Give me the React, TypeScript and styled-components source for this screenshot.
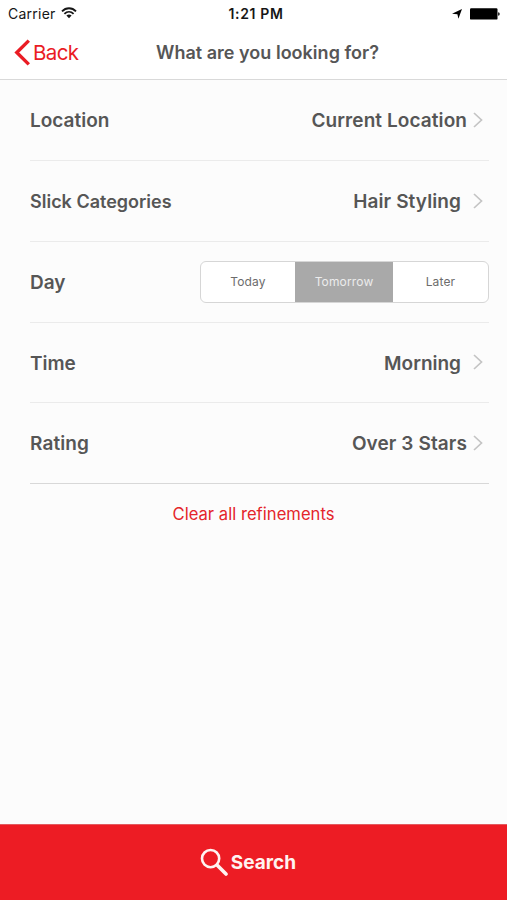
import React from "react";
import styled, { createGlobalStyle } from "styled-components";

const GlobalStyle = createGlobalStyle`
  * { box-sizing: border-box; }
  body { margin: 0; background: #fcfcfc; }
  button { border: 0; padding: 0; background: none; font: inherit; cursor: pointer; }
`;

const Screen = styled.div`
  height: 900px;
  display: flex;
  flex-direction: column;
  background: #fcfcfc;
  font-family: Inter, "Liberation Sans", sans-serif;
  color: #565656;
  white-space: nowrap;
`;

const Header = styled.header`
  height: 80px;
  background: #fff;
  border-bottom: 1px solid #d9d9d9;
`;

const StatusBar = styled.div`
  height: 27px;
  display: grid;
  grid-template-columns: 1fr auto 1fr;
  align-items: center;
  padding: 0 7px 0 8px;
  color: #161616;
`;

const Carrier = styled.div`
  display: flex;
  align-items: center;
  gap: 5px;
  font-size: 14px;
  letter-spacing: 0.25px;

  svg { margin-bottom: 2px; }
`;

const Clock = styled.div`
  font-size: 14px;
  font-weight: 600;
  letter-spacing: 0.65px;
  padding-left: 4px;
`;

const Indicators = styled.div`
  display: flex;
  justify-content: flex-end;
  align-items: center;
  gap: 7px;
  color: #000;
`;

const NavBar = styled.nav`
  height: 52px;
  display: grid;
  grid-template-columns: 142px 1fr 114px;
  align-items: center;
`;

const BackButton = styled.button`
  display: flex;
  align-items: center;
  gap: 2px;
  margin: 0 0 1px 14px;
  color: #ea1c24;
  font-size: 20.5px;
  letter-spacing: -0.6px;
`;

const Title = styled.h1`
  margin: 0 0 1px;
  font-size: 18px;
  font-weight: 600;
  letter-spacing: 0.02px;
  text-align: center;
`;

const Filters = styled.main`
  display: grid;
  grid-template-rows: 81px 81px repeat(3, 80.67px);
  margin: 0 18px 0 30px;
`;

const Row = styled.div`
  display: flex;
  justify-content: space-between;
  align-items: center;
  padding-top: 1.6px;
  border-bottom: 1px solid #ebebeb;

  &:last-child { border-bottom-color: #d8d8d8; }
`;

const Label = styled.span<{ $size?: number; $tracking?: number }>`
  font-size: ${(p) => p.$size ?? 19}px;
  letter-spacing: ${(p) => p.$tracking ?? 0}px;
  font-weight: 600;
`;

const Picker = styled.button<{ $gap: number }>`
  display: flex;
  align-items: center;
  gap: ${(p) => p.$gap}px;
  margin-right: 6px;
  color: inherit;

  svg { margin-bottom: 2px; }
`;

const Segments = styled.div`
  width: 289px;
  height: 42px;
  display: grid;
  grid-template-columns: 94px 98px 1fr;
  margin-bottom: 2px;
  border: 1px solid #d6d6d6;
  border-radius: 6px;
  background: #fff;
  overflow: hidden;
`;

const Segment = styled.button<{ $active?: boolean }>`
  font-size: 12px;
  letter-spacing: 0.15px;
  color: ${(p) => (p.$active ? "#ececec" : "#6c6c6c")};
  background: ${(p) => (p.$active ? "#a9a9a9" : "transparent")};
`;

const ClearButton = styled.button`
  align-self: center;
  height: 60px;
  color: #e4252b;
  font-size: 16.6px;
  letter-spacing: 0.02px;
`;

const SearchButton = styled.button`
  height: 76px;
  margin-top: auto;
  display: flex;
  align-items: center;
  justify-content: center;
  gap: 3px;
  padding-right: 11px;
  background: #ed1c24;
  border-top: 1px solid #e25a5f;
  color: #fff3f1;
  font-size: 19px;
  font-weight: 700;

  svg { margin-bottom: 2px; }
`;

const WifiIcon = () => (
  <svg width="16" height="12" viewBox="0 0 16 12" fill="none" stroke="currentColor" strokeWidth="1.8">
    <path d="M1 4.3C5 .2 11 .2 15 4.3M3.4 6.8c2.7-2.7 6.5-2.7 9.2 0" />
    <path d="M8 11.2 5.4 8.6q2.6-2 5.2 0Z" fill="currentColor" stroke="none" />
  </svg>
);

const LocationArrow = () => (
  <svg width="10" height="10" viewBox="0 0 10 10" fill="currentColor">
    <path d="M10 0 6.4 9.8 5.4 5.2 0 4.7Z" />
  </svg>
);

const BatteryIcon = () => (
  <svg width="31" height="12" viewBox="0 0 31 12" fill="currentColor">
    <rect x="1" y="0.2" width="27.5" height="11.4" rx="1.2" />
    <path d="M29.2 4.2q1.5.3 1.5 1.8t-1.5 1.8Z" />
  </svg>
);

const BackChevron = () => (
  <svg width="17" height="27" viewBox="0 0 17 27" fill="none" stroke="currentColor" strokeWidth="3.4">
    <path d="M14.8 1.6 2.8 13.5l12 11.9" />
  </svg>
);

const Chevron = () => (
  <svg width="10" height="16" viewBox="0 0 10 16" fill="none" stroke="#c4c4c4" strokeWidth="1.7">
    <path d="m1 1 7.5 7L1 15" />
  </svg>
);

const SearchIcon = () => (
  <svg width="28" height="28" viewBox="0 0 28 28" fill="none" stroke="currentColor">
    <circle cx="10.6" cy="10.6" r="8.6" strokeWidth="2.6" />
    <path d="m17 17 9 9" strokeWidth="3.6" strokeLinecap="round" />
  </svg>
);

const days = ["Today", "Tomorrow", "Later"];

export default function App() {
  return (
    <>
      <GlobalStyle />
      <Screen>
        <Header>
          <StatusBar>
            <Carrier>Carrier <WifiIcon /></Carrier>
            <Clock>1:21 PM</Clock>
            <Indicators><LocationArrow /><BatteryIcon /></Indicators>
          </StatusBar>
          <NavBar>
            <BackButton><BackChevron />Back</BackButton>
            <Title>What are you looking for?</Title>
          </NavBar>
        </Header>
        <Filters>
          <Row>
            <Label>Location</Label>
            <Picker $gap={6}><Label $tracking={0.08}>Current Location</Label><Chevron /></Picker>
          </Row>
          <Row>
            <Label $size={18}>Slick Categories</Label>
            <Picker $gap={12}><Label $tracking={0.1}>Hair Styling</Label><Chevron /></Picker>
          </Row>
          <Row>
            <Label>Day</Label>
            <Segments>
              {days.map((day) => (
                <Segment key={day} $active={day === "Tomorrow"}>{day}</Segment>
              ))}
            </Segments>
          </Row>
          <Row>
            <Label>Time</Label>
            <Picker $gap={12}><Label>Morning</Label><Chevron /></Picker>
          </Row>
          <Row>
            <Label $tracking={0.1}>Rating</Label>
            <Picker $gap={6}><Label $tracking={0.1}>Over 3 Stars</Label><Chevron /></Picker>
          </Row>
        </Filters>
        <ClearButton>Clear all refinements</ClearButton>
        <SearchButton><SearchIcon />Search</SearchButton>
      </Screen>
    </>
  );
}
